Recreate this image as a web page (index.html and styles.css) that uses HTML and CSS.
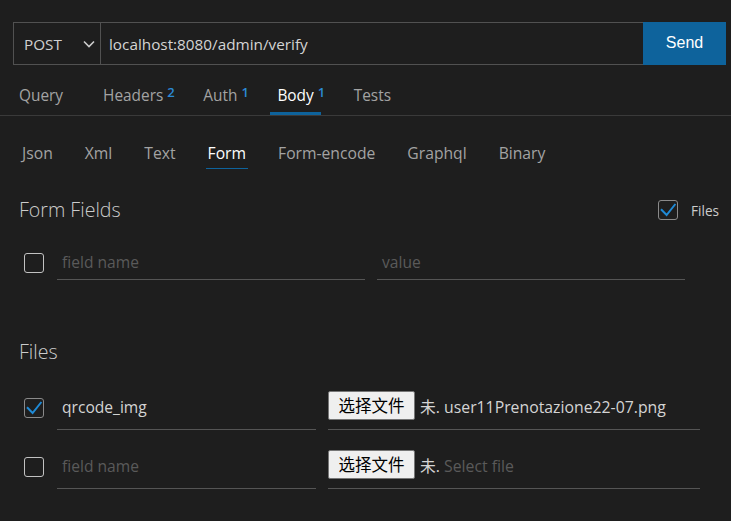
FILE: index.html
```html
<!DOCTYPE html>
<html lang="en">
<head>
<meta charset="utf-8">
<title>Request</title>
<link rel="stylesheet" href="styles.css">
</head>
<body>
<div class="urlbar">
  <div class="field">
    <div class="method">
      <span>POST</span>
      <svg class="chev" width="12" height="8" viewBox="0 0 12 8"><path d="M1 1.5 L6 6.5 L11 1.5" fill="none" stroke="#cccccc" stroke-width="1.6"/></svg>
    </div>
    <div class="url">localhost:8080/admin/verify</div>
  </div>
  <button class="send">Send</button>
</div>

<nav class="tabs">
  <span class="tab">Query</span>
  <span class="tab">Headers<sup class="badge">2</sup></span>
  <span class="tab">Auth<sup class="badge">1</sup></span>
  <span class="tab active">Body<sup class="badge">1</sup></span>
  <span class="tab">Tests</span>
</nav>

<nav class="subtabs">
  <span class="subtab">Json</span>
  <span class="subtab">Xml</span>
  <span class="subtab">Text</span>
  <span class="subtab active">Form</span>
  <span class="subtab">Form-encode</span>
  <span class="subtab">Graphql</span>
  <span class="subtab">Binary</span>
</nav>

<div class="section-head form-head">
  <h2 class="heading">Form Fields</h2>
  <label class="files-toggle">
    <span class="cb checked"><svg width="20" height="20" viewBox="0 0 20 20"><path d="M3 9.2 L8.6 15 L17.4 4" fill="none" stroke="#1f8ad6" stroke-width="2"/></svg></span>
    <span class="files-label">Files</span>
  </label>
</div>

<div class="form-row">
  <span class="cb"></span>
  <div class="input name placeholder">field name</div>
  <div class="input value placeholder">value</div>
</div>

<div class="section-head files-head">
  <h2 class="heading">Files</h2>
</div>

<div class="file-row first">
  <span class="cb checked"><svg width="20" height="20" viewBox="0 0 20 20"><path d="M3 9.2 L8.6 15 L17.4 4" fill="none" stroke="#1f8ad6" stroke-width="2"/></svg></span>
  <div class="input fname">qrcode_img</div>
  <div class="file-field">
    <button class="file-btn">选择文件</button>
    <span class="file-name">未. user11Prenotazione22-07.png</span>
  </div>
</div>

<div class="file-row second">
  <span class="cb"></span>
  <div class="input fname placeholder">field name</div>
  <div class="file-field">
    <button class="file-btn">选择文件</button>
    <span class="file-name">未. <span class="placeholder">Select file</span></span>
  </div>
</div>
</body>
</html>
```

FILE: styles.css
```css
* { box-sizing: border-box; }

body {
  margin: 0;
  background: #1e1e1e;
  color: #cccccc;
  font-family: "Open Sans", "Noto Sans CJK SC", sans-serif;
  font-size: 15.3px;
}

/* URL bar */
.urlbar {
  display: flex;
  height: 43px;
  margin: 22px 5px 0 13px;
}
.field {
  flex: 1;
  display: flex;
  border: 1px solid #515151;
  border-right: none;
}
.method {
  width: 87px;
  display: flex;
  align-items: center;
  justify-content: space-between;
  padding: 0 5px 0 10px;
  border-right: 1px solid #515151;
  color: #d0d0d0;
}
.chev { display: block; }
.url {
  flex: 1;
  display: flex;
  align-items: center;
  padding-left: 8px;
  color: #d4d4d4;
}
.send {
  width: 83px;
  border: none;
  background: #0e639c;
  color: #ffffff;
  font-family: "Liberation Sans", Arial, sans-serif;
  font-size: 16px;
  padding: 0 0 2px 0;
}

/* Main tabs */
.tabs {
  display: flex;
  gap: 26px;
  margin-top: 13px;
  padding-left: 12px;
  border-bottom: 1px solid #3a3a3a;
}
.tab {
  position: relative;
  height: 37px;
  line-height: 34px;
  padding: 1px 7px 0;
  border-bottom: 3px solid transparent;
  color: #a3a3a3;
  font-size: 15.4px;
}
.tab.active {
  color: #ffffff;
  border-bottom-color: #0e639c;
}
.badge {
  position: absolute;
  left: calc(100% - 3px);
  top: 7px;
  font-size: 13px;
  line-height: 14px;
  font-weight: 600;
  color: #2b8ad6;
}

/* Body sub tabs */
.subtabs {
  display: flex;
  gap: 28px;
  margin-top: 22px;
  padding-left: 20px;
}
.subtab {
  height: 31px;
  line-height: 30px;
  padding: 0 2px;
  border-bottom: 1px solid transparent;
  color: #a3a3a3;
  font-size: 15.7px;
}
.subtab.active {
  color: #ffffff;
  border-bottom-color: #0e639c;
}

/* Section heads */
.section-head {
  display: flex;
  align-items: center;
  justify-content: space-between;
  height: 30px;
  padding: 0 12px 0 19px;
}
.form-head { margin-top: 26px; }
.files-head { margin-top: 57px; }
.heading {
  margin: 0;
  font-size: 19.6px;
  font-weight: 300;
  line-height: 30px;
  color: #cccccc;
}
.files-toggle {
  display: flex;
  align-items: center;
  gap: 13px;
}
.files-label {
  font-size: 13.6px;
  color: #cccccc;
}

/* Checkboxes */
.cb {
  flex: none;
  width: 20px;
  height: 20px;
  border: 1px solid #c2c2c2;
  border-radius: 3px;
  position: relative;
}
.cb.checked { border-color: #8a8a8a; }
.cb svg {
  position: absolute;
  left: -1px;
  top: -1px;
}

/* Inputs */
.input {
  border-bottom: 1px solid #555555;
  color: #d4d4d4;
  padding-left: 5px;
  line-height: 22px;
  font-size: 15.6px;
}
.placeholder { color: #5a5a5a; }

.form-row {
  display: flex;
  align-items: flex-start;
  margin-top: 25px;
  padding-left: 24px;
}
.form-row .cb { margin-top: 3px; }
.form-row .input {
  height: 30px;
  padding-top: 1px;
}
.form-row .name { width: 308px; margin-left: 13px; }
.form-row .value { width: 308px; margin-left: 12px; }

.file-row {
  display: flex;
  align-items: flex-start;
  height: 42px;
  padding-left: 24px;
}
.file-row.first { margin-top: 21px; }
.file-row.second { margin-top: 17px; }
.file-row .cb { margin-top: 10px; }
.fname {
  width: 259px;
  height: 42px;
  margin-left: 13px;
  padding-top: 8px;
}
.file-field {
  display: flex;
  align-items: flex-start;
  width: 372px;
  height: 42px;
  margin-left: 12px;
  padding-top: 3px;
  border-bottom: 1px solid #555555;
}
.file-btn {
  height: 29px;
  width: 87px;
  padding: 0;
  background: #efefef;
  border: 1px solid #767676;
  border-radius: 2px;
  color: #000000;
  font-family: "Noto Sans CJK SC", sans-serif;
  font-size: 16.5px;
  line-height: 27px;
}
.file-name {
  margin-left: 5px;
  line-height: 29px;
  padding-top: 2px;
  color: #d4d4d4;
  white-space: nowrap;
  font-size: 15.8px;
}
```
